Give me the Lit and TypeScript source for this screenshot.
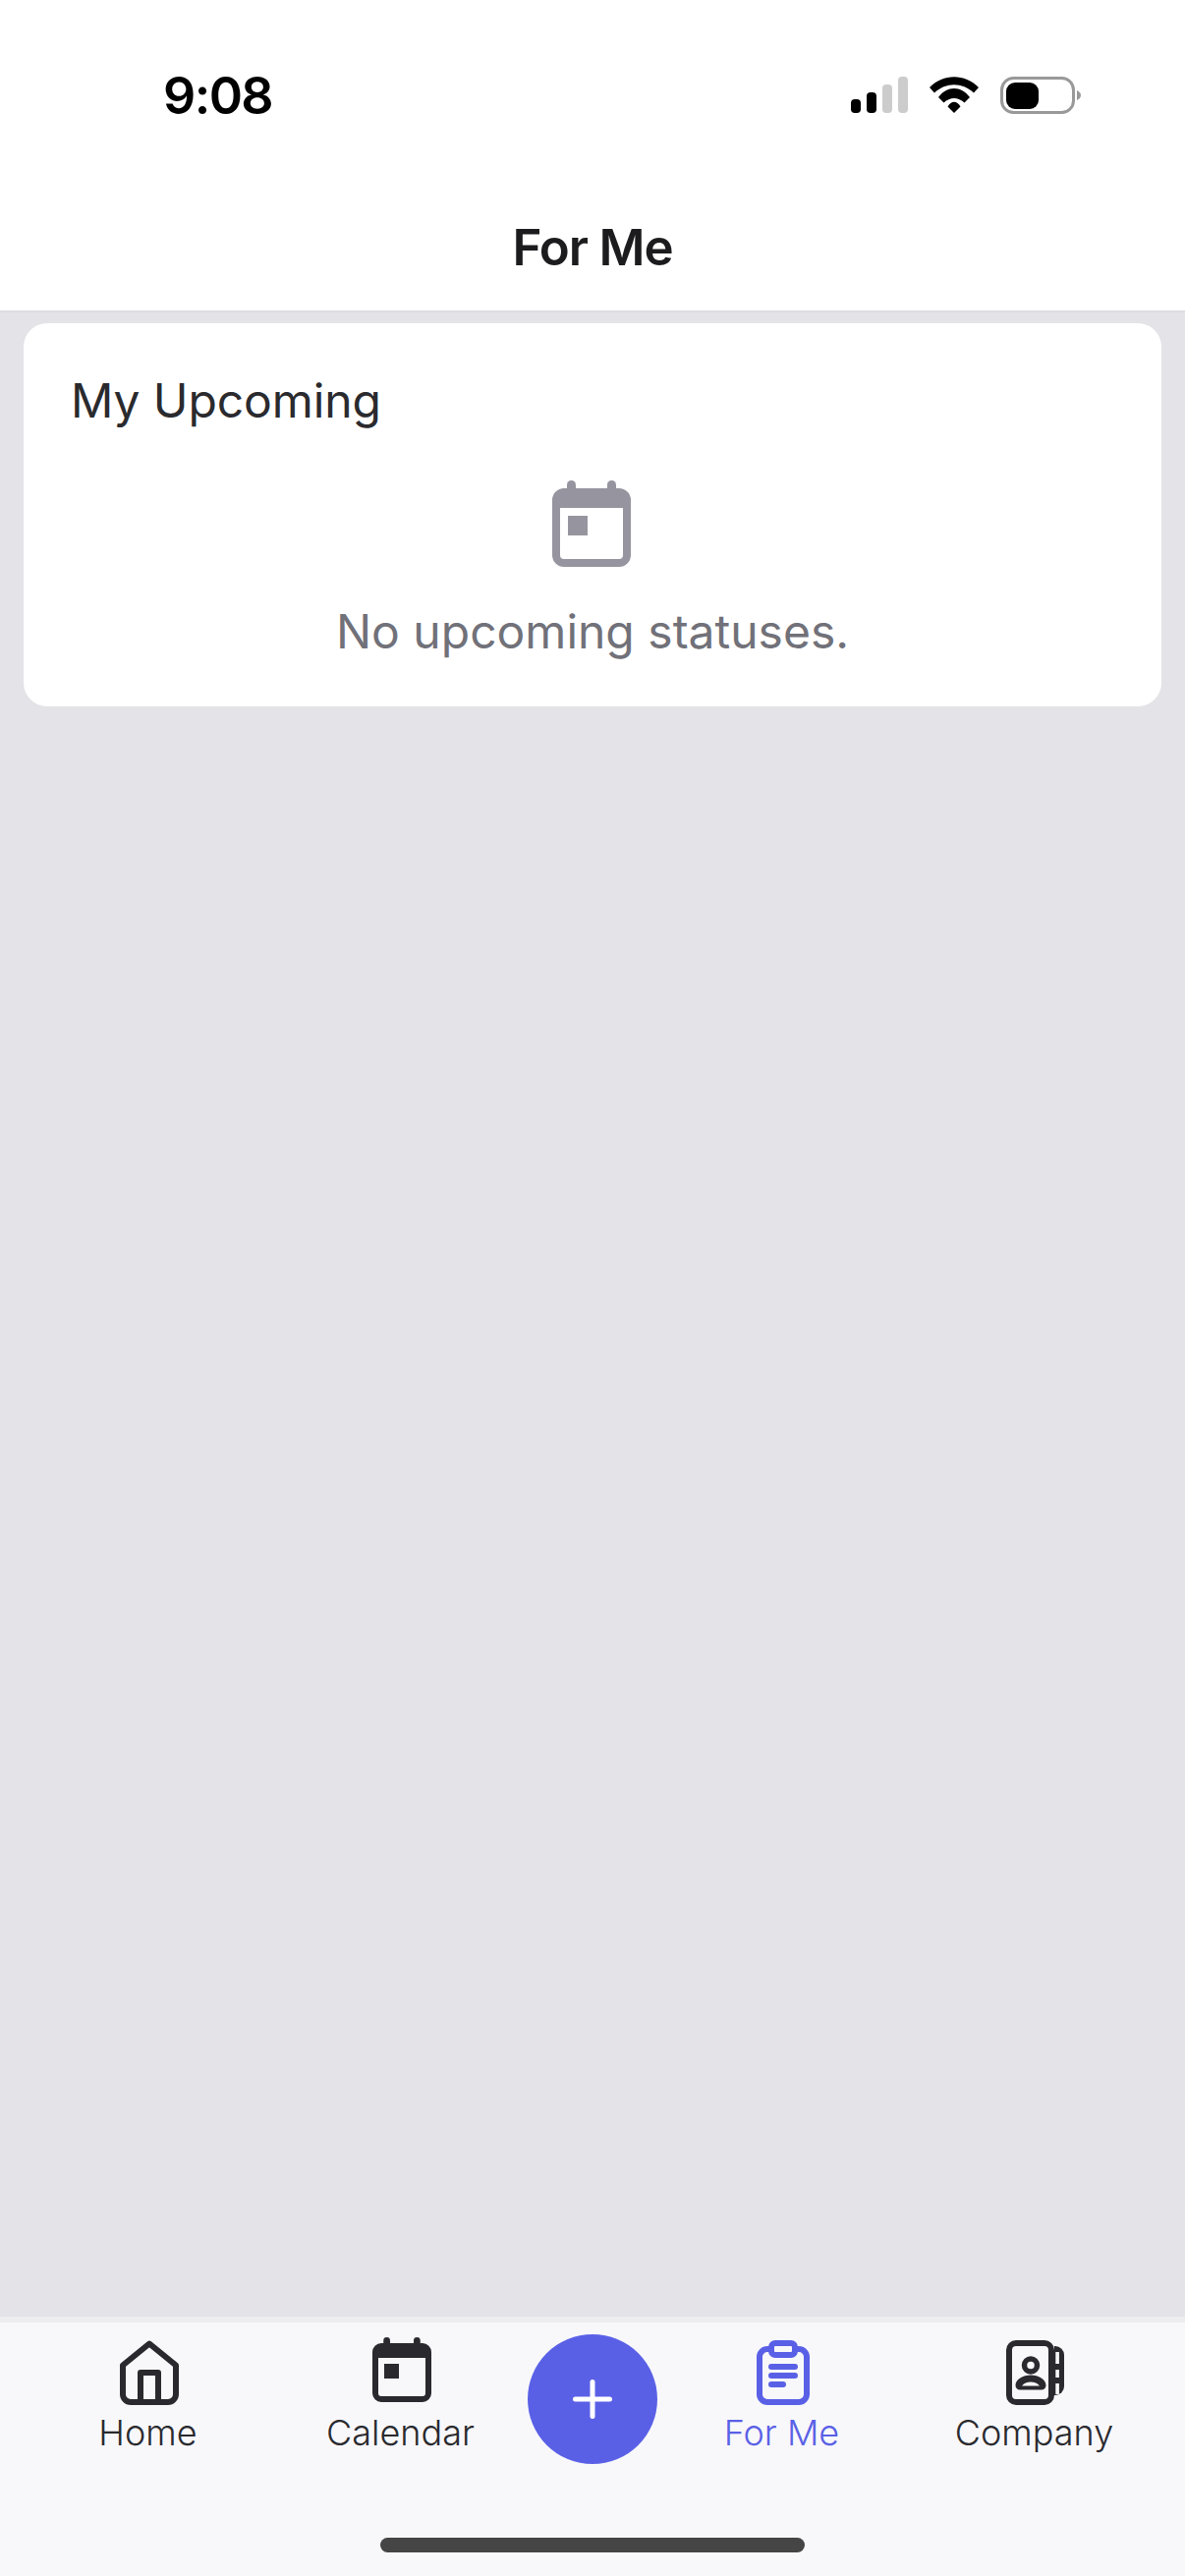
import {LitElement, html, css, svg} from 'lit';
import {customElement} from 'lit/decorators.js';

// shared 80x88 calendar drawing, also used at 3/4 size in the tab bar
const calendarShape = svg`
  <rect x="15" y="0" width="9" height="16" rx="4.5"></rect>
  <rect x="56" y="0" width="9" height="16" rx="4.5"></rect>
  <path fill-rule="evenodd" d="M12 8H68A12 12 0 0 1 80 20V76A12 12 0 0 1 68 88H12A12 12 0 0 1 0 76V20A12 12 0 0 1 12 8ZM8 28V76A4 4 0 0 0 12 80H68A4 4 0 0 0 72 76V28Z"></path>
  <rect x="16" y="36" width="20" height="20"></rect>
`;

const homeIcon = html`<svg viewBox="0 0 72 72" width="72" height="72" fill="none" stroke="currentColor" stroke-width="6" stroke-linejoin="round">
  <path d="M9 28.5L36 6.5L63 28.5V58A8 8 0 0 1 55 66H17A8 8 0 0 1 9 58Z"></path>
  <path d="M27 66V36H45V66"></path>
</svg>`;

const calendarTabIcon = html`<svg viewBox="-8 0 96 96" width="72" height="72" fill="currentColor">${calendarShape}</svg>`;

const clipboardIcon = html`<svg viewBox="0 0 72 72" width="72" height="72" fill="none" stroke="currentColor" stroke-width="6" stroke-linecap="round">
  <rect x="12" y="12" width="48" height="54" rx="8"></rect>
  <rect x="24" y="6" width="24" height="12" rx="4" fill="#f8f8fb"></rect>
  <path d="M24 30H48M24 39H48M24 48H36"></path>
</svg>`;

const companyIcon = html`<svg viewBox="0 0 72 72" width="72" height="72" fill="currentColor">
  <path d="M55 9H56A9 9 0 0 1 65 18V50A9 9 0 0 1 56 59H55Z"></path>
  <rect x="56.3" y="15" width="3.6" height="12" fill="#f8f8fb"></rect>
  <rect x="56.3" y="33" width="3.6" height="8" fill="#f8f8fb"></rect>
  <rect x="56.3" y="47" width="3.6" height="11" fill="#f8f8fb"></rect>
  <rect x="9" y="6" width="43" height="60" rx="7" fill="#f8f8fb" stroke="currentColor" stroke-width="6"></rect>
  <circle cx="31" cy="28.5" r="6.5" fill="none" stroke="currentColor" stroke-width="5.5"></circle>
  <path fill-rule="evenodd" d="M15.5 49C15.5 43 23 38.5 31 38.5S46.5 43 46.5 49A4.5 4.5 0 0 1 42 53.5H20A4.5 4.5 0 0 1 15.5 49ZM22 49.5H40C38 46.8 35 45.5 31 45.5S24 46.8 22 49.5Z"></path>
</svg>`;

@customElement('app-root')
export class AppRoot extends LitElement {
  static override styles = css`
    :host {
      display: flex;
      flex-direction: column;
      height: 2622px;
      background: #e3e3e8;
      font-family: Inter, 'Noto Sans', sans-serif;
      color: #2a2a2e;
    }
    .top {
      background: #fff;
      border-bottom: 2px solid #dcdce1;
      height: 316px;
      box-sizing: content-box;
      flex: none;
    }
    .status {
      display: flex;
      justify-content: space-between;
      align-items: flex-start;
      padding: 78px 106px 0 166px;
      height: 100px;
    }
    .time {
      font-size: 52px;
      font-weight: 600;
      line-height: 40px;
      color: #000;
      letter-spacing: -1.6px;
    }
    .indicators {
      display: flex;
      gap: 22px;
      height: 38px;
    }
    .title {
      margin: 0;
      text-align: center;
      font-size: 51px;
      font-weight: 600;
      line-height: 62px;
      padding-top: 43px;
      letter-spacing: -1.1px;
      color: #1c1c1e;
    }
    main {
      flex: 1;
      padding: 11px 24px;
    }
    .card {
      background: #fff;
      border-radius: 24px;
      height: 390px;
      padding: 50px 48px 0;
      box-sizing: border-box;
    }
    .card h2 {
      margin: 0;
      font-size: 48px;
      font-weight: 420;
      line-height: 58px;
      letter-spacing: -0.1px;
    }
    .empty {
      display: flex;
      flex-direction: column;
      align-items: center;
      margin-top: 52px;
      color: #96959f;
    }
    .empty svg {
      margin-right: 2px;
    }
    .empty p {
      margin: 37px 0 0;
      font-size: 48px;
      font-weight: 380;
      line-height: 58px;
      color: #717179;
    }
    footer {
      flex: none;
      height: 258px;
      border-top: 6px solid #ededef;
      background: #f8f8fb;
      display: flex;
      flex-direction: column;
    }
    .tabs {
      display: flex;
      padding: 0 23px;
      align-items: flex-start;
    }
    .tab {
      width: 257px;
      margin-top: 15px;
      display: flex;
      flex-direction: column;
      align-items: center;
      font-size: 36px;
      font-weight: 360;
      line-height: 50px;
    }
    .tab span {
      margin-right: 2px;
    }
    .tab.active {
      color: #5a60e6;
    }
    .fab {
      flex: none;
      width: 132px;
      height: 132px;
      margin: 12px -1px 0 0;
      border-radius: 50%;
      background: #5a60e6;
      display: flex;
      align-items: center;
      justify-content: center;
    }
    .home-bar {
      margin: auto auto 24px;
      width: 432px;
      height: 15px;
      border-radius: 8px;
      background: #454545;
    }
  `;

  override render() {
    return html`
      <div class="top">
        <div class="status">
          <span class="time">9:08</span>
          <div class="indicators">
            <svg viewBox="0 0 58 38" width="58" height="38">
              <rect x="0" y="23" width="10" height="14" rx="4" fill="#000"></rect>
              <rect x="16" y="16" width="10" height="21" rx="4" fill="#000"></rect>
              <rect x="32" y="8" width="10" height="29" rx="4" fill="#ccc"></rect>
              <rect x="48" y="0" width="10" height="37" rx="4" fill="#ccc"></rect>
            </svg>
            <svg viewBox="0 0 50 38" width="50" height="38" fill="#000">
              <path d="M0 11C14 -3.5 36 -3.5 50 11L45 16.5C33.5 5.5 16.5 5.5 5 16.5Z"></path>
              <path d="M9 21C18 9 32 9 41 21L35.5 26.5C29 20.5 21 20.5 14.5 26.5Z"></path>
              <path d="M18.5 30.5C22 24 28 24 31.5 30.5L25 37Z"></path>
            </svg>
            <svg viewBox="0 0 82 38" width="82" height="38">
              <rect x="1.5" y="1.5" width="73" height="35" rx="12" fill="none" stroke="#999" stroke-width="3"></rect>
              <rect x="6" y="6" width="33" height="27" rx="9" fill="#000"></rect>
              <path d="M78 14C80.5 15 82 17 82 19S80.5 23 78 24Z" fill="#999"></path>
            </svg>
          </div>
        </div>
        <h1 class="title">For Me</h1>
      </div>
      <main>
        <section class="card">
          <h2>My Upcoming</h2>
          <div class="empty">
            <svg viewBox="0 0 80 88" width="80" height="88" fill="currentColor">${calendarShape}</svg>
            <p>No upcoming statuses.</p>
          </div>
        </section>
      </main>
      <footer>
        <nav class="tabs">
          <div class="tab">${homeIcon}<span>Home</span></div>
          <div class="tab">${calendarTabIcon}<span>Calendar</span></div>
          <div class="fab">
            <svg viewBox="0 0 40 40" width="40" height="40" fill="none" stroke="#fff" stroke-width="5" stroke-linecap="round">
              <path d="M20 2.5V37.5M2.5 20H37.5"></path>
            </svg>
          </div>
          <div class="tab active">${clipboardIcon}<span>For Me</span></div>
          <div class="tab">${companyIcon}<span>Company</span></div>
        </nav>
        <div class="home-bar"></div>
      </footer>
    `;
  }
}

declare global {
  interface HTMLElementTagNameMap {
    'app-root': AppRoot;
  }
}
